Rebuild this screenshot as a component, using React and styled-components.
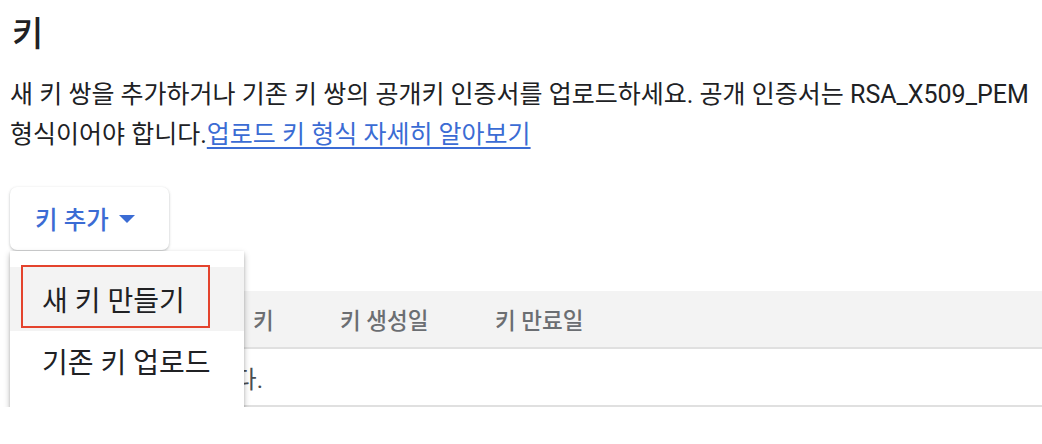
import React from "react";
import styled, { createGlobalStyle } from "styled-components";

const GlobalStyle = createGlobalStyle`
  body {
    margin: 0;
    background: #ffffff;
    font-family: Roboto, "Noto Sans CJK KR", sans-serif;
    color: #202124;
  }
`;

const Page = styled.div`
  padding: 13px 0 0 10px;
  width: 1032px;
`;

const Title = styled.h1`
  margin: 0 0 0 2px;
  font-size: 34px;
  line-height: 42px;
  font-weight: 500;
  color: #202124;
`;

const Intro = styled.p`
  margin: 20px 0 0;
  max-width: 1030px;
  font-size: 25px;
  line-height: 40px;
  color: #202124;
`;

const Link = styled.a`
  color: #3b6cd4;
  text-decoration: underline;
  text-underline-offset: 4px;
  text-decoration-thickness: 2px;
`;

const Actions = styled.div`
  position: relative;
  margin-top: 32px;
`;

const AddButton = styled.button`
  display: flex;
  align-items: center;
  gap: 10px;
  height: 63px;
  padding: 0 34px 0 25px;
  border: none;
  border-radius: 7px;
  background: #fff;
  box-shadow: 0 1px 3px rgba(60, 64, 67, 0.25), 0 1px 2px rgba(60, 64, 67, 0.12);
  font-family: Roboto, "Noto Sans CJK KR", sans-serif;
  font-size: 24.5px;
  font-weight: 500;
  color: #3b6cd4;
  cursor: pointer;
`;

const Menu = styled.div`
  position: absolute;
  top: 64px;
  left: 0;
  z-index: 2;
  width: 234px;
  padding: 16px 0 19px;
  background: #fff;
  box-shadow: 0 3px 6px rgba(0, 0, 0, 0.28), 0 1px 2px rgba(0, 0, 0, 0.12);
`;

const MenuItem = styled.div`
  position: relative;
  display: flex;
  align-items: center;
  height: ${(p) => (p.$first ? 64 : 60)}px;
  padding-left: 32px;
  font-size: 28px;
  color: #202124;
  background: ${(p) => (p.$active ? "#f3f3f3" : "transparent")};
`;

const Highlight = styled.span`
  position: absolute;
  left: 11px;
  top: -2px;
  width: 189px;
  height: 63px;
  box-sizing: border-box;
  border: 2px solid #e4432d;
`;

const Table = styled.div`
  margin-top: 41px;
`;

const HeadRow = styled.div`
  display: flex;
  align-items: center;
  height: 56px;
  background: #f3f3f3;
  border-bottom: 2px solid #e0e0e0;
`;

const HeadCell = styled.div`
  width: ${(p) => p.$w};
  flex: ${(p) => (p.$grow ? 1 : "none")};
  padding-left: 12px;
  box-sizing: border-box;
  font-size: 22.5px;
  font-weight: 500;
  color: #6b6e72;
`;

const BodyRow = styled.div`
  display: flex;
  align-items: center;
  height: 56px;
  padding-left: 36px;
  border-bottom: 2px solid #e0e0e0;
  font-size: 24px;
  color: #4a4d51;
`;

const Caret = () => (
  <svg width="16" height="8" viewBox="0 0 16 8">
    <path d="M0 0 L16 0 L8 8 Z" fill="#3b6cd4" />
  </svg>
);

export default function App() {
  return (
    <>
      <GlobalStyle />
      <Page>
        <Title>키</Title>
        <Intro>
          새 키 쌍을 추가하거나 기존 키 쌍의 공개키 인증서를 업로드하세요. 공개 인증서는
          RSA_X509_PEM 형식이어야 합니다.
          <Link href="#">업로드 키 형식 자세히 알아보기</Link>
        </Intro>
        <Actions>
          <AddButton>
            키 추가
            <Caret />
          </AddButton>
          <Menu>
            <MenuItem $active $first>
              <Highlight />새 키 만들기
            </MenuItem>
            <MenuItem>기존 키 업로드</MenuItem>
          </Menu>
        </Actions>
        <Table>
          <HeadRow>
            <HeadCell $w="231px" />
            <HeadCell $w="87px">키</HeadCell>
            <HeadCell $w="155px">키 생성일</HeadCell>
            <HeadCell $grow>키 만료일</HeadCell>
          </HeadRow>
          <BodyRow>표시할 행이 없습니다.</BodyRow>
        </Table>
      </Page>
    </>
  );
}
